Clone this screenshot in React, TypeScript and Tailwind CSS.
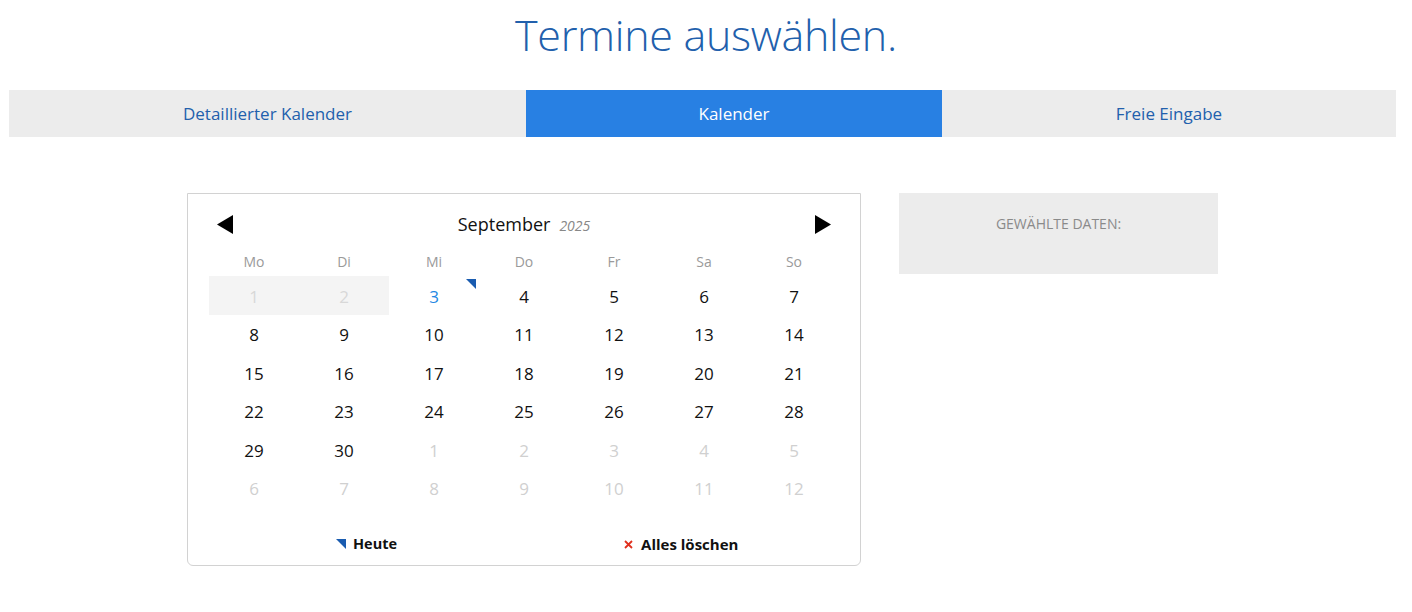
import React from 'react';

type Day = { n: number; muted?: boolean; past?: boolean; today?: boolean };

const DAY_NAMES = ['Mo', 'Di', 'Mi', 'Do', 'Fr', 'Sa', 'So'];

function buildWeeks(): Day[][] {
  const days: Day[] = [];
  for (let i = 1; i <= 30; i++) days.push({ n: i, past: i < 3, today: i === 3 });
  for (let i = 1; i <= 12; i++) days.push({ n: i, muted: true });
  const weeks: Day[][] = [];
  for (let w = 0; w < 6; w++) weeks.push(days.slice(w * 7, w * 7 + 7));
  return weeks;
}

const TABS = [
  { label: 'Detaillierter Kalender', active: false },
  { label: 'Kalender', active: true },
  { label: 'Freie Eingabe', active: false },
];

function Arrow({ dir }: { dir: 'left' | 'right' }) {
  return (
    <svg width="16" height="19" viewBox="0 0 16 19" className="block">
      {dir === 'left' ? <polygon points="16,0 16,19 0,9.5" fill="#000" /> : <polygon points="0,0 0,19 16,9.5" fill="#000" />}
    </svg>
  );
}

function Corner({ size = 10 }: { size?: number }) {
  return (
    <svg width={size} height={size} viewBox="0 0 10 10" className="block">
      <polygon points="0,0 10,0 10,10" fill="#1a5cb0" />
    </svg>
  );
}

function Cross() {
  return (
    <svg width="9" height="9" viewBox="0 0 9 9" className="block">
      <path d="M1 1 L8 8 M8 1 L1 8" stroke="#e0301e" strokeWidth="1.8" />
    </svg>
  );
}

export default function App() {
  const weeks = buildWeeks();

  return (
    <div className="w-[1412px] h-[612px] bg-white font-['Segoe_UI','Open_Sans',sans-serif] overflow-hidden">
      {/* Title */}
      <div className="h-[90px] flex items-center justify-center pb-[22px]">
        <h1 className="text-[43px] font-light text-[#2260ac] leading-none tracking-[-0.3px]">Termine auswählen.</h1>
      </div>

      {/* Tabs */}
      <div className="ml-[9px] w-[1387px] h-[47px] grid grid-cols-[517px_416px_454px]">
        {TABS.map((t) => (
          <div
            key={t.label}
            className={`flex items-center justify-center text-[17px] ${t.active ? 'bg-[#2880e3] text-white' : 'bg-[#ececec] text-[#2260ac]'}`}
          >
            {t.label}
          </div>
        ))}
      </div>

      {/* Content */}
      <div className="mt-[56px] ml-[187px] flex items-start gap-[38px]">
        {/* Calendar */}
        <div className="w-[674px] h-[373px] border border-[#d2d2d2] rounded-b-[6px] flex flex-col">
          <div className="h-[57px] flex items-center px-[29px] pt-[4px]">
            <Arrow dir="left" />
            <div className="flex-1 flex items-baseline justify-center gap-[9px]">
              <span className="text-[18px] text-[#111]">September</span>
              <span className="text-[14px] italic text-[#888]">2025</span>
            </div>
            <Arrow dir="right" />
          </div>

          <div className="mx-[21px]">
            <div className="grid grid-cols-7 h-[21px] items-center">
              {DAY_NAMES.map((d) => (
                <div key={d} className="text-center text-[14px] text-[#9a9a9a] leading-none">{d}</div>
              ))}
            </div>
            <div className="mt-[4px]">
              {weeks.map((week, wi) => (
                <div key={wi} className="grid grid-cols-7 h-[38.5px]">
                  {week.map((d, di) => (
                    <div
                      key={di}
                      className={`relative flex items-center justify-center pt-[2px] text-[17px] ${d.past ? 'bg-[#f4f4f4] text-[#d8d8d8]' : d.muted ? 'text-[#d0d0d0]' : d.today ? 'text-[#1f88e3]' : 'text-[#111]'}`}
                    >
                      {d.n}
                      {d.today && (
                        <span className="absolute top-[3px] right-[3px]">
                          <Corner />
                        </span>
                      )}
                    </div>
                  ))}
                </div>
              ))}
            </div>
          </div>

          <div className="flex-1 flex items-end pb-[11px] pl-[148px]">
            <div className="flex items-center gap-[7px] leading-[20px]">
              <Corner />
              <span className="text-[14.5px] font-bold text-[#111]">Heute</span>
            </div>
            <div className="ml-[227px] flex items-center gap-[8px] leading-[20px]">
              <Cross />
              <span className="text-[15px] font-bold text-[#111]">Alles löschen</span>
            </div>
          </div>
        </div>

        {/* Selected dates */}
        <div className="w-[319px] h-[81px] bg-[#ececec] pt-[21px]">
          <p className="text-center text-[14px] uppercase text-[#8a8a8a] leading-[20px]">Gewählte Daten:</p>
        </div>
      </div>
    </div>
  );
}
